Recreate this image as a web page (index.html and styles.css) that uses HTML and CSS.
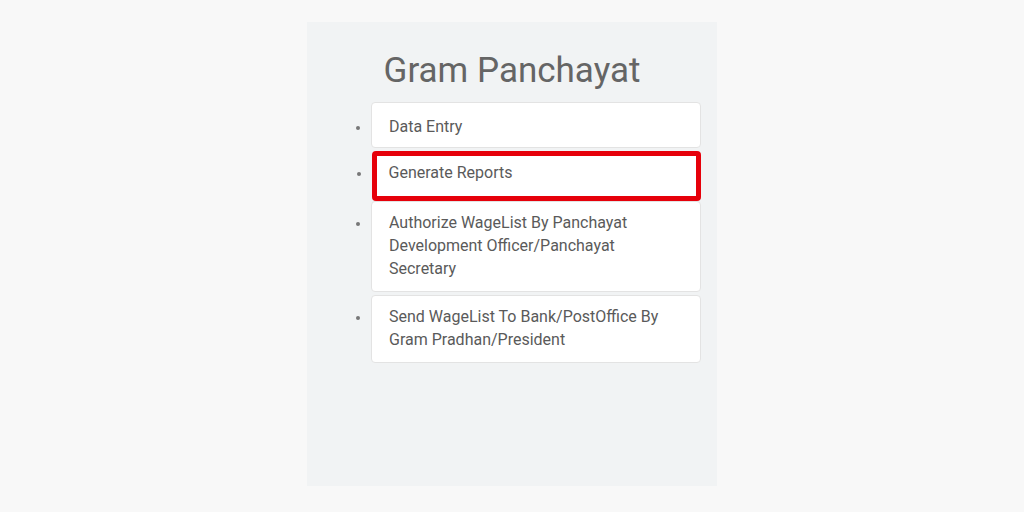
FILE: index.html
```html
<!DOCTYPE html>
<html>
<head>
<meta charset="utf-8">
<link rel="stylesheet" href="styles.css">
</head>
<body>
<div class="page">
  <section class="panel">
    <h1 class="title">Gram Panchayat</h1>
    <ul class="menu">
      <li class="item">Data Entry</li>
      <li class="item highlight">Generate Reports</li>
      <li class="item">Authorize WageList By Panchayat Development Officer/Panchayat Secretary</li>
      <li class="item">Send WageList To Bank/PostOffice By Gram Pradhan/President</li>
    </ul>
  </section>
</div>
</body>
</html>
```
FILE: styles.css
```css
html, body {
  margin: 0;
  padding: 0;
  background: #f8f8f8;
  font-family: Roboto, "Liberation Sans", sans-serif;
}
.page {
  display: flex;
  justify-content: center;
  padding-top: 22px;
}
.panel {
  width: 410px;
  height: 464px;
  box-sizing: border-box;
  background: #f1f3f4;
  padding: 28px 16px 0 24px;
  box-shadow: 0 3px 0 #ffffff;
}
.title {
  margin: 0 8px 11px 0;
  font-size: 35px;
  font-weight: 400;
  line-height: 41px;
  color: #656565;
  text-align: center;
}
.menu {
  margin: 0;
  padding: 0 0 0 40px;
  list-style: disc;
  color: #666;
}
.item {
  background: #fff;
  border: 1px solid #e3e3e3;
  border-radius: 4px;
  padding: 9px 17px 11px 17px;
  font-size: 16px;
  line-height: 23px;
  color: #5a5a5a;
  margin-bottom: 3px;
}
.item:first-child {
  padding-top: 12px;
  padding-bottom: 9px;
}
.item::marker {
  color: #777;
  font-size: 14px;
}
.highlight {
  border: 5.5px solid #e6000a;
  padding: 5px 12px 11.5px 11.5px;
  margin-left: 1px;
  margin-bottom: 0;
  border-radius: 4px;
}
```
